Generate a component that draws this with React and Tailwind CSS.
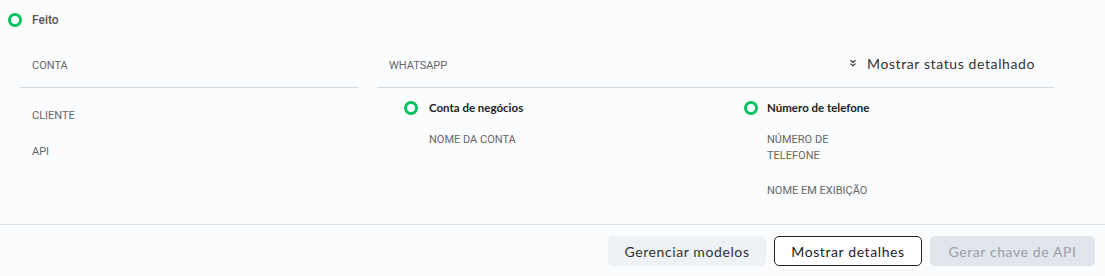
import React from "react";

const Ring = () => (
  <span className="inline-block w-[14px] h-[14px] rounded-full border-[3.5px] border-[#06c25e] shrink-0" />
);

const label = "block text-[11px] text-[#666] uppercase leading-[16px]";

export default function App() {
  return (
    <div
      className="w-[1105px] h-[276px] bg-[#fbfcfe] flex flex-col overflow-hidden"
      style={{ fontFamily: "Lato, 'Open Sans', sans-serif" }}
    >
      <div className="flex items-center gap-[10px] pl-[8px] pt-[13px] h-[27px]">
        <Ring />
        <span className="text-[12px] text-[#555]" style={{ fontFamily: "Roboto, sans-serif", fontWeight: 500 }}>
          Feito
        </span>
      </div>

      <div className="flex pl-[20px] gap-[19px] flex-1 mt-[14px]" style={{ fontFamily: "Roboto, 'Liberation Sans', sans-serif" }}>
        <div className="w-[338px] flex flex-col">
          <div className="h-[47px] flex items-center pl-[12px] pt-[4px] border-b border-[#d3dae3]">
            <span className={label}>Conta</span>
          </div>
          <div className="pl-[12px] pt-[20px] flex flex-col gap-[20px]">
            <span className={label}>Cliente</span>
            <span className={label}>API</span>
          </div>
        </div>

        <div className="w-[677px] flex flex-col">
          <div className="h-[47px] flex items-center justify-between pl-[12px] pr-[19px] pt-[4px] border-b border-[#d3dae3]">
            <span className={label}>WhatsApp</span>
            <button className="flex items-center gap-[10px] text-[14px] text-[#333] tracking-[0.6px] -mt-[6px]" style={{ fontFamily: "Lato, sans-serif" }}>
              <svg width="8" height="8" viewBox="0 0 8 8" fill="none" stroke="#333" strokeWidth="1.2">
                <path d="M1.5 1.2 L4 3.4 L6.5 1.2" />
                <path d="M1.5 4.6 L4 6.8 L6.5 4.6" />
              </svg>
              Mostrar status detalhado
            </button>
          </div>
          <div className="flex pl-[27px] pt-[12px]">
            <div className="w-[340px] flex flex-col">
              <div className="flex items-center gap-[11px] h-[16px]">
                <Ring />
                <span className="text-[11.5px] font-bold text-[#222]" style={{ fontFamily: "Lato, sans-serif" }}>
                  Conta de negócios
                </span>
              </div>
              <div className="pl-[25px] pt-[16px] flex flex-col">
                <span className={label}>Nome da conta</span>
              </div>
            </div>
            <div className="flex flex-col">
              <div className="flex items-center gap-[9px] h-[16px]">
                <Ring />
                <span className="text-[11.5px] font-bold text-[#222]" style={{ fontFamily: "Lato, sans-serif" }}>
                  Número de telefone
                </span>
              </div>
              <div className="pl-[23px] pt-[16px] flex flex-col gap-[19px]">
                <span className={label + " w-[80px]"}>Número de telefone</span>
                <span className={label}>Nome em exibição</span>
              </div>
            </div>
          </div>
        </div>
      </div>

      <div className="border-t border-[#dde5ec] h-[52px] flex items-start justify-end gap-[8px] pr-[10px] pt-[11px]" style={{ fontFamily: "Lato, sans-serif" }}>
        <button className="h-[30px] w-[158px] rounded-[5px] bg-[#eef1f5] text-[14px] text-[#333] tracking-[0.6px]">
          Gerenciar modelos
        </button>
        <button className="h-[30px] w-[148px] rounded-[5px] bg-white border border-[#222] text-[14px] text-[#222] tracking-[0.6px]">
          Mostrar detalhes
        </button>
        <button className="h-[30px] w-[165px] rounded-[5px] bg-[#e1e6ec] text-[14px] text-[#9aa0a6] tracking-[0.6px]">
          Gerar chave de API
        </button>
      </div>
    </div>
  );
}
